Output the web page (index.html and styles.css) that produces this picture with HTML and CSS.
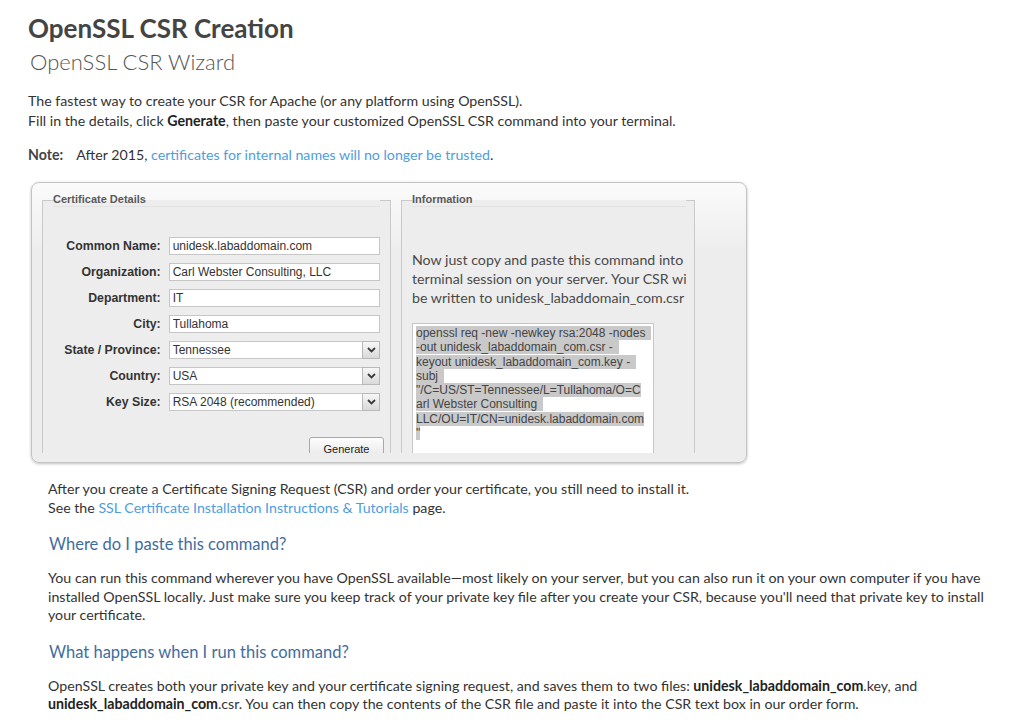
FILE: index.html
```html
<!DOCTYPE html>
<html lang="en">
<head>
  <meta charset="UTF-8" />
  <title>OpenSSL CSR Creation</title>
  <link rel="stylesheet" href="styles.css">
</head>
<body>
  <div class="page">
    <h1 class="title">OpenSSL CSR Creation</h1>
    <h2 class="subtitle">OpenSSL CSR Wizard</h2>

    <p class="intro">
      The fastest way to create your CSR for Apache (or any platform using OpenSSL).<br>
      Fill in the details, click <b>Generate</b>, then paste your customized OpenSSL CSR command into your terminal.
    </p>
    <p class="note"><b>Note:</b> After 2015, <a href="#">certificates for internal names will no longer be trusted</a>.</p>

    <div class="wizard">
      <div class="wizard-inner">
        <fieldset class="box details">
          <legend>Certificate Details</legend>
          <div class="form">
            <div class="row"><label>Common Name:</label><input type="text" value="unidesk.labaddomain.com"></div>
            <div class="row"><label>Organization:</label><input type="text" value="Carl Webster Consulting, LLC"></div>
            <div class="row"><label>Department:</label><input type="text" value="IT"></div>
            <div class="row"><label>City:</label><input type="text" value="Tullahoma"></div>
            <div class="row">
              <label>State / Province:</label>
              <div class="select"><span>Tennessee</span><span class="arrow"><svg width="9" height="6" viewBox="0 0 9 6"><path d="M1 1l3.5 3.5L8 1" fill="none" stroke="#3a3a3a" stroke-width="1.8"/></svg></span></div>
            </div>
            <div class="row">
              <label>Country:</label>
              <div class="select"><span>USA</span><span class="arrow"><svg width="9" height="6" viewBox="0 0 9 6"><path d="M1 1l3.5 3.5L8 1" fill="none" stroke="#3a3a3a" stroke-width="1.8"/></svg></span></div>
            </div>
            <div class="row">
              <label>Key Size:</label>
              <div class="select"><span>RSA 2048 (recommended)</span><span class="arrow"><svg width="9" height="6" viewBox="0 0 9 6"><path d="M1 1l3.5 3.5L8 1" fill="none" stroke="#3a3a3a" stroke-width="1.8"/></svg></span></div>
            </div>
          </div>
          <div class="actions"><button type="button">Generate</button></div>
        </fieldset>

        <fieldset class="box info">
          <legend>Information</legend>
          <div class="info-text">
            <p>Now just copy and paste this command into a<br>
            terminal session on your server. Your CSR will<br>
            be written to unidesk_labaddomain_com.csr</p>
          </div>
          <div class="cmd">
            <span class="sp">openssl req -new -newkey rsa:2048 -nodes</span><br>
            <span class="sp">-out unidesk_labaddomain_com.csr -</span><br>
            <span class="sp">keyout unidesk_labaddomain_com.key -</span><br>
            <span class="sp">subj</span><br>
            <span>"/C=US/ST=Tennessee/L=Tullahoma/O=C</span><br>
            <span class="sp">arl Webster Consulting</span><br>
            <span>LLC/OU=IT/CN=unidesk.labaddomain.com</span><br>
            <span>"</span>
          </div>
        </fieldset>
      </div>
    </div>

    <div class="after">
      <p>After you create a Certificate Signing Request (CSR) and order your certificate, you still need to install it.<br>
      See the <a href="#">SSL Certificate Installation Instructions &amp; Tutorials</a> page.</p>

      <h3>Where do I paste this command?</h3>
      <p>You can run this command wherever you have OpenSSL available—most likely on your server, but you can also run it on your own computer if you have installed OpenSSL locally. Just make sure you keep track of your private key file after you create your CSR, because you'll need that private key to install your certificate.</p>

      <h3>What happens when I run this command?</h3>
      <p>OpenSSL creates both your private key and your certificate signing request, and saves them to two files: <b>unidesk_labaddomain_com</b>.key, and <b>unidesk_labaddomain_com</b>.csr. You can then copy the contents of the CSR file and paste it into the CSR text box in our order form.</p>
    </div>
  </div>
</body>
</html>
```

FILE: styles.css
```css
* { box-sizing: border-box; }
html, body { margin: 0; padding: 0; background: #fff; }
body {
  font-family: Lato, "Open Sans", sans-serif;
  font-size: 14.2px;
  color: #333;
}

a { color: #4d9de0; text-decoration: none; }
b { font-weight: 700; color: #222; }

.page {
  padding: 13px 24px 0 28px;
}

.title {
  margin: 0;
  font-size: 26px;
  line-height: 30px;
  font-weight: 700;
  color: #444;
}

.subtitle {
  margin: 5px 0 0 2px;
  font-size: 22px;
  line-height: 28px;
  font-weight: 300;
  color: #555;
}

.intro {
  margin: 15px 0 0;
  line-height: 20px;
}

.note {
  margin: 14px 0 0;
  line-height: 20px;
}
.note b { margin-right: 10px; color: #444; }

/* wizard panel */
.wizard {
  width: 716px;
  height: 281px;
  margin: 17px 0 0 3px;
  padding: 10px 0 0 10px;
  border: 1px solid #c2c2c2;
  border-radius: 8px;
  background: linear-gradient(#fbfbfb, #ededed 70px, #ededed);
  box-shadow: 0 1px 3px rgba(0,0,0,0.25);
}

.wizard-inner {
  display: flex;
  gap: 10px;
  height: 260px;
  overflow: hidden;
  align-items: flex-start;
}

.box {
  margin: 0;
  padding: 0 10px;
  height: 320px;
  border: 1px solid #c9c9c9;
  background: #ededed;
  min-width: 0;
}

.box legend {
  width: 100%;
  padding: 0;
  font-family: "Liberation Sans", Arial, sans-serif;
  font-size: 11px;
  font-weight: 700;
  line-height: 13px;
  color: #5a5a5a;
  border-bottom: 1px solid #e2e2e2;
}

.details { width: 349px; }
.info { width: 294px; padding-right: 8px; }

.form { padding-top: 26px; }

.row {
  display: flex;
  align-items: center;
  height: 26px;
}

.row label {
  width: 108px;
  margin-right: 8px;
  text-align: right;
  font-family: "Liberation Sans", Arial, sans-serif;
  font-size: 12.3px;
  font-weight: 700;
  color: #333;
}

.row input,
.select {
  width: 212px;
  height: 18px;
  border: 1px solid #c6c6c6;
  background: #fff;
  font-family: "Liberation Sans", Arial, sans-serif;
  font-size: 12px;
  color: #333;
}

.row input {
  padding: 0 3px;
  outline: none;
}

.select {
  display: flex;
  align-items: center;
  justify-content: space-between;
  padding-left: 3px;
  border-right: none;
}

.select .arrow {
  display: flex;
  align-items: center;
  justify-content: center;
  width: 18px;
  height: 18px;
  margin-top: -1px;
  margin-bottom: -1px;
  border: 1px solid #b9b9b9;
  background: linear-gradient(#f7f7f7, #d9d9d9);
}

.actions {
  margin-top: 22px;
  margin-right: -4px;
  text-align: right;
}

.actions button {
  width: 75px;
  height: 23px;
  border: 1px solid #a9a9a9;
  border-radius: 3px;
  background: linear-gradient(#fdfdfd, #e6e6e6);
  font-family: "Liberation Sans", Arial, sans-serif;
  font-size: 11px;
  color: #222;
}

/* information column */
.info-text {
  overflow: hidden;
  margin-top: 43px;
}

.info-text p {
  margin: 0;
  white-space: nowrap;
  line-height: 19px;
  color: #4a4a4a;
}

.cmd {
  width: 242px;
  height: 200px;
  margin-top: 16px;
  padding: 2px 3px;
  border: 1px solid #c6c6c6;
  background: #fff;
  font-family: "Liberation Sans", Arial, sans-serif;
  font-size: 12px;
  line-height: 14.3px;
  color: #444;
  white-space: nowrap;
}

.cmd span { background: #c9c9c9; }
.cmd span.sp { padding-right: 6px; }

/* text below the wizard */
.after {
  margin: 17px 0 0 20px;
}

.after p {
  margin: 0;
  line-height: 18.5px;
}

.after h3 {
  margin: 16px 0 14px 1px;
  font-size: 16.5px;
  line-height: 22px;
  font-weight: 400;
  color: #3f6da0;
}
```
